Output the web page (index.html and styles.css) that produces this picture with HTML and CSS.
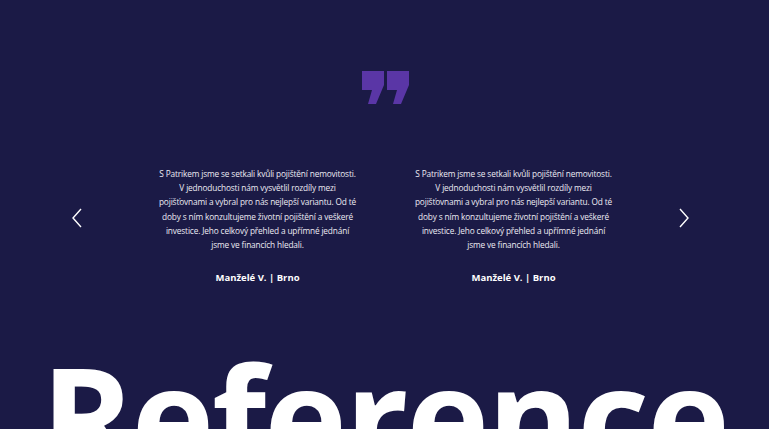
FILE: index.html
```html
<!DOCTYPE html>
<html lang="cs">
<head>
<meta charset="utf-8">
<link rel="stylesheet" href="styles.css">
</head>
<body>
<section class="testimonials">
  <div class="quote-mark">
    <svg width="48" height="34" viewBox="0 0 48 34">
      <path d="M1 0 H23 V14 L15 33 H7 L11 19 H1 Z" fill="#5a36a6"/>
      <path d="M26 0 H48 V14 L40 33 H32 L36 19 H26 Z" fill="#5a36a6"/>
    </svg>
  </div>
  <div class="slider">
    <button class="arrow" aria-label="Předchozí">
      <svg width="14" height="22" viewBox="0 0 14 22"><path d="M11 2 L3 11 L11 20" fill="none" stroke="#fff" stroke-width="1.4"/></svg>
    </button>
    <div class="slides">
      <div class="slide">
        <p class="text">S Patrikem jsme se setkali kvůli pojištění nemovitosti.<br>V&nbsp;jednoduchosti nám vysvětlil rozdíly mezi<br>pojišťovnami a vybral pro nás nejlepší variantu. Od té<br>doby s ním konzultujeme životní pojištění a veškeré<br>investice. Jeho celkový přehled a upřímné jednání<br>jsme ve financích hledali.</p>
        <p class="name">Manželé V. | Brno</p>
      </div>
      <div class="slide">
        <p class="text">S Patrikem jsme se setkali kvůli pojištění nemovitosti.<br>V&nbsp;jednoduchosti nám vysvětlil rozdíly mezi<br>pojišťovnami a vybral pro nás nejlepší variantu. Od té<br>doby s ním konzultujeme životní pojištění a veškeré<br>investice. Jeho celkový přehled a upřímné jednání<br>jsme ve financích hledali.</p>
        <p class="name">Manželé V. | Brno</p>
      </div>
    </div>
    <button class="arrow arrow-next" aria-label="Další">
      <svg width="14" height="22" viewBox="0 0 14 22"><path d="M3 2 L11 11 L3 20" fill="none" stroke="#fff" stroke-width="1.4"/></svg>
    </button>
  </div>
  <h2 class="big">Reference</h2>
</section>
</body>
</html>
```
FILE: styles.css
```css
html, body {
  margin: 0;
  padding: 0;
  background: #1b1a46;
  overflow: hidden;
}
.testimonials {
  width: 769px;
  height: 429px;
  overflow: hidden;
  font-family: "Open Sans", sans-serif;
  color: #fff;
  display: flex;
  flex-direction: column;
  align-items: center;
}
.quote-mark {
  margin-top: 71px;
  height: 34px;
  display: flex;
  justify-content: center;
}
.slider {
  margin-top: 62px;
  width: 100%;
  display: flex;
  align-items: flex-start;
  padding-left: 70px;
  box-sizing: border-box;
}
.arrow {
  background: none;
  border: 0;
  padding: 0;
  margin-top: 40px;
  width: 14px;
  height: 22px;
  display: flex;
  flex-shrink: 0;
  cursor: pointer;
}
.arrow-next {
  margin-left: 35.5px;
}
.slides {
  display: flex;
  width: 512px;
  margin-left: 45.5px;
  flex-shrink: 0;
}
.slide {
  width: 256px;
  text-align: center;
  padding: 0 10px;
  box-sizing: border-box;
}
.text {
  margin: 0;
  font-size: 8.3px;
  line-height: 14.2px;
  letter-spacing: -0.15px;
  color: #ecebf3;
  white-space: nowrap;
}
.name {
  margin: 19px 0 0;
  font-size: 9.5px;
  font-weight: 700;
}
.big {
  margin: 0;
  margin-top: 61px;
  font-size: 140px;
  line-height: 1;
  font-weight: 700;
  letter-spacing: -2px;
  white-space: nowrap;
}
```
